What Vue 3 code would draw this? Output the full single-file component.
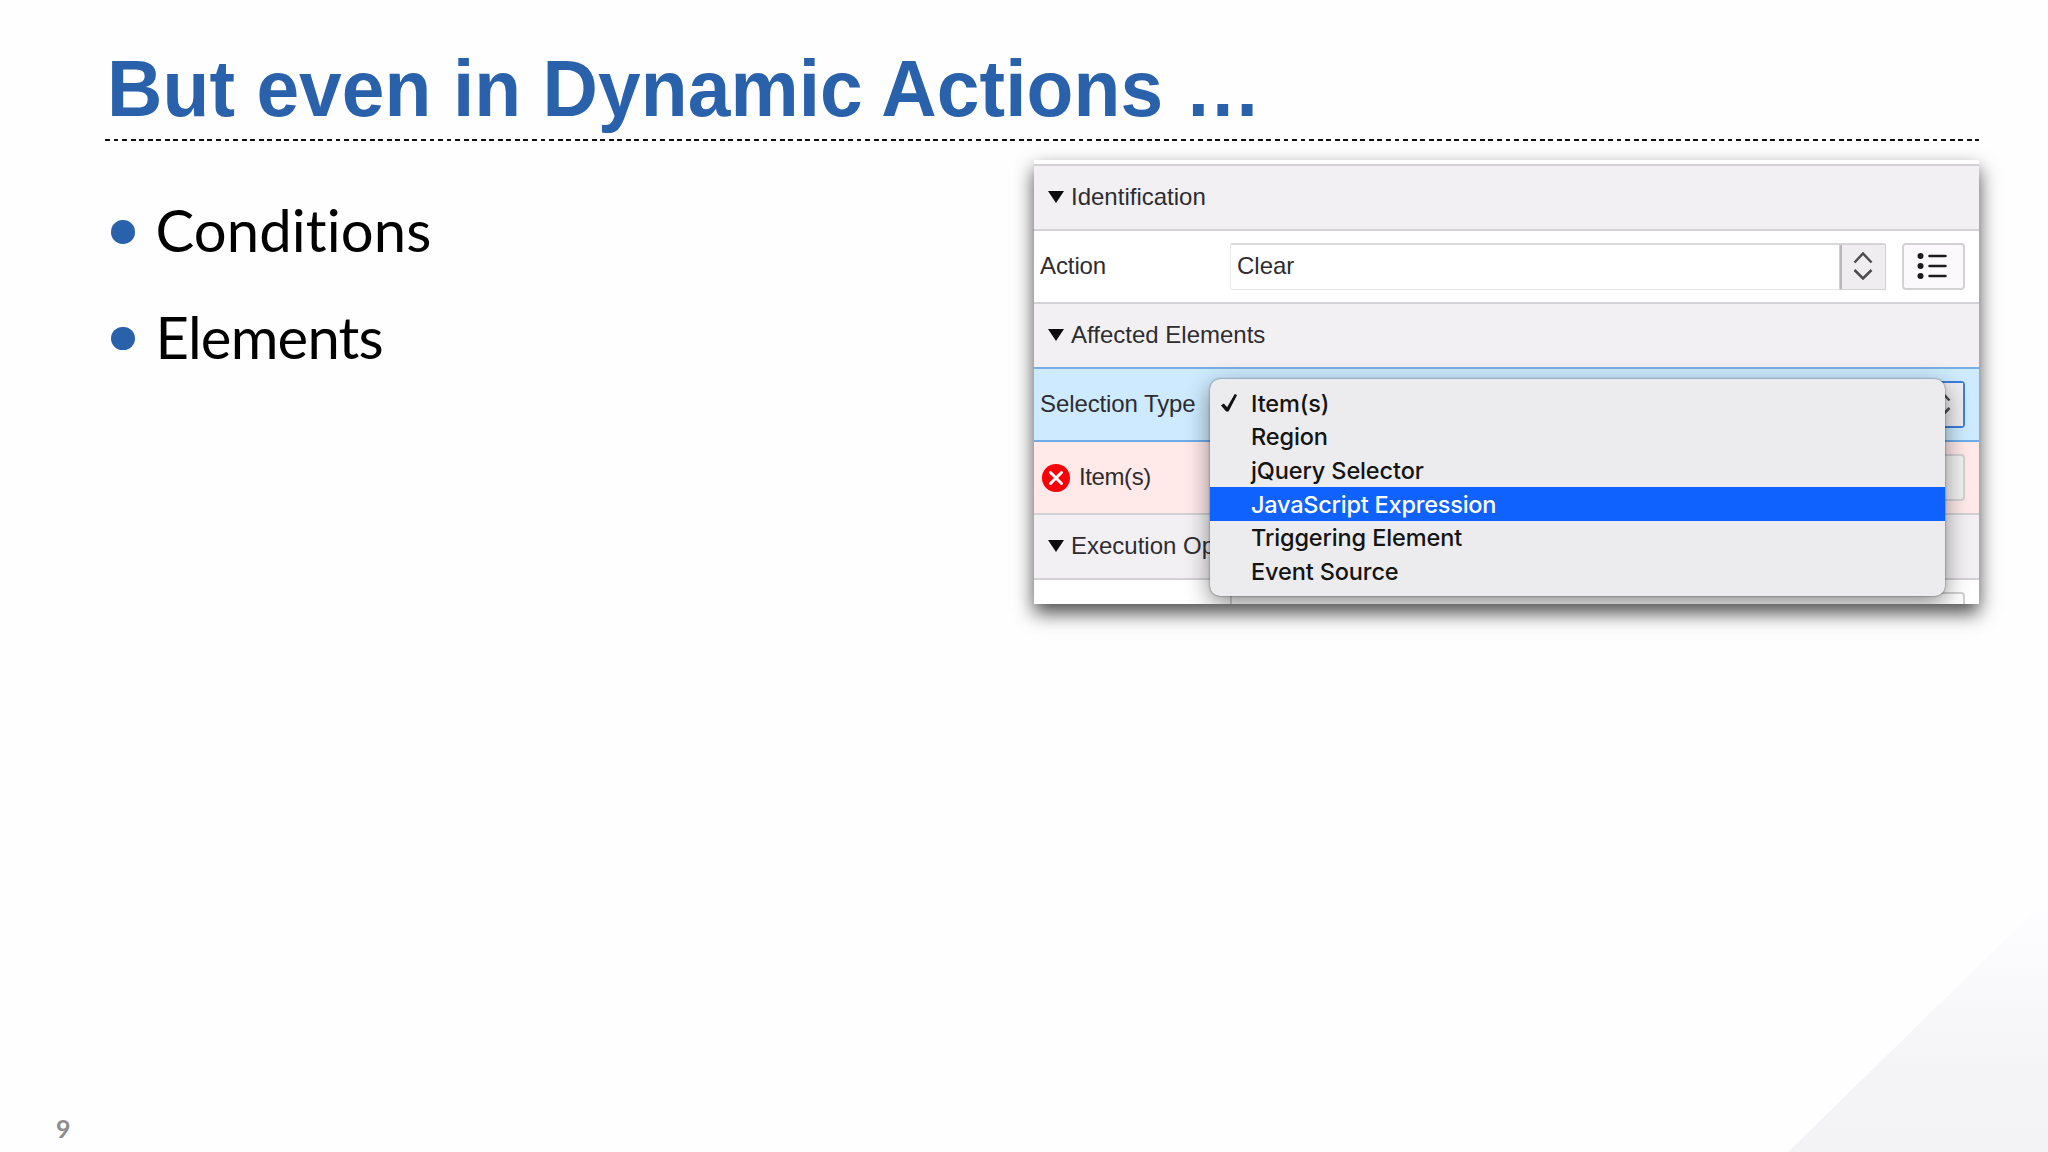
<script setup>
const bullets = ["Conditions", "Elements"];

const options = [
  { label: "Item(s)", checked: true },
  { label: "Region" },
  { label: "jQuery Selector" },
  { label: "JavaScript Expression", active: true },
  { label: "Triggering Element" },
  { label: "Event Source" },
];
</script>

<template>
  <main class="slide">
    <header class="slide-header">
      <h1 class="slide-title">But even in Dynamic Actions …</h1>
      <div class="slide-rule"></div>
    </header>

    <section class="slide-body">
      <ul class="bullets">
        <li v-for="bullet in bullets" :key="bullet" class="bullet">
          <span class="bullet-dot"></span>
          <span class="bullet-text">{{ bullet }}</span>
        </li>
      </ul>

      <!-- Property editor -->
      <div class="panel">
        <div class="group group-first">
          <span class="triangle"></span>
          <span class="group-title">Identification</span>
        </div>

        <div class="row">
          <label class="row-label">Action</label>
          <div class="select">
            <span class="select-value">Clear</span>
            <span class="select-arrows">
              <svg width="20" height="28" viewBox="0 0 20 28">
                <path d="M1.5 10.5 10 1.5l8.500 9M1.500 18l8.500 8.500 8.500-8.500" />
              </svg>
            </span>
          </div>
          <button class="list-button" aria-label="Quick pick">
            <svg width="30" height="26" viewBox="0 0 30 26">
              <circle cx="3.500" cy="3" r="3" />
              <circle cx="3.500" cy="13" r="3" />
              <circle cx="3.500" cy="23" r="3" />
              <path d="M12.500 3h16M12.500 13h16M12.500 23h16" />
            </svg>
          </button>
        </div>

        <div class="group group-before-focus">
          <span class="triangle"></span>
          <span class="group-title">Affected Elements</span>
        </div>

        <div class="row row-focus">
          <label class="row-label">Selection Type</label>
          <div class="select select-focus">
            <span class="select-value"></span>
            <span class="select-arrows">
              <svg width="20" height="28" viewBox="0 0 20 28">
                <path d="M1.5 10.5 10 1.5l8.500 9M1.500 18l8.500 8.500 8.500-8.500" />
              </svg>
            </span>
          </div>
        </div>

        <div class="row row-error">
          <svg class="error-icon" width="28" height="28" viewBox="0 0 28 28">
            <circle cx="14" cy="14" r="14" />
            <path d="M8.500 8.500l11 11M19.500 8.500l-11 11" />
          </svg>
          <label class="row-label">Item(s)</label>
          <div class="field field-grey"></div>
        </div>

        <div class="group">
          <span class="triangle"></span>
          <span class="group-title">Execution Options</span>
        </div>

        <div class="row row-last">
          <div class="field"></div>
        </div>

        <!-- Opened dropdown -->
        <ul class="popup">
          <li
            v-for="option in options"
            :key="option.label"
            class="option"
            :class="{ active: option.active }"
          >
            <svg
              v-if="option.checked"
              class="check"
              width="20"
              height="20"
              viewBox="0 0 20 20"
            >
              <path d="M1 12.500 4 10.500 7.500 14.500 15.500 0.500 18 1.500 9 19 6.500 19Z" />
            </svg>
            <span>{{ option.label }}</span>
          </li>
        </ul>
      </div>
    </section>

    <footer class="slide-footer">9</footer>
    <div class="corner"></div>
  </main>
</template>

<style>
body {
  margin: 0;
  overflow: hidden;
}
</style>

<style scoped>
/* === SLIDE === */
.slide {
  position: relative;
  display: flex;
  flex-direction: column;
  width: 2048px;
  height: 1152px;
  box-sizing: border-box;
  overflow: hidden;
  background: #fefefe;
  font-family: "Liberation Sans", Arial, sans-serif;
}

.slide-header {
  padding: 50px 69px 0 105px;
}

.slide-title {
  margin: 0 0 9px 2px;
  font-size: 76.7px;
  font-weight: 700;
  line-height: 80px;
  letter-spacing: 0.08px;
  color: #2a61ab;
  white-space: nowrap;
  transform: scaleY(1.04);
  transform-origin: 0 83%;
}

.slide-rule {
  height: 2px;
  background: repeating-linear-gradient(
    to right,
    #111 0,
    #111 4.9px,
    transparent 4.9px,
    transparent 8.54px
  );
}

.slide-body {
  flex: 1;
  display: grid;
  grid-template-columns: 923px 945px;
  align-items: start;
  padding-left: 111px;
}

/* === BULLETS === */
.bullets {
  margin: 0;
  padding: 36px 0 0;
  list-style: none;
}

.bullet {
  display: flex;
  align-items: center;
  height: 106.500px;
}

.bullet-dot {
  width: 23.500px;
  height: 23.500px;
  margin-top: 3px;
  border-radius: 50%;
  background: #2a61ab;
}

.bullet-text {
  margin-left: 21px;
  font-family: Lato, sans-serif;
  font-size: 58px;
  line-height: 70px;
  letter-spacing: 0.1px;
  color: #000;
}

.bullet:last-child .bullet-text {
  letter-spacing: -0.8px;
}

/* === PANEL === */
.panel {
  position: relative;
  box-sizing: border-box;
  height: 444px;
  margin-top: 19px;
  padding-top: 4px;
  overflow: hidden;
  background: #fff;
  box-shadow: 0 9px 18px rgba(0, 0, 0, 0.7);
  font-size: 24px;
  color: #2e2c30;
}

.group {
  display: flex;
  align-items: center;
  box-sizing: border-box;
  height: 65px;
  padding-left: 14px;
  border-bottom: 2px solid #d3d1d5;
  background: #f2f0f3;
  white-space: nowrap;
}

.group-first {
  height: 67px;
  border-top: 2px solid #d3d1d5;
}

.group-before-focus {
  border-bottom-color: #78aee6;
}

.group-title {
  padding-bottom: 2px;
}

.triangle {
  margin: 0 7px 1px 0;
  border-left: 8px solid transparent;
  border-right: 8px solid transparent;
  border-top: 12px solid #0c0c0e;
}

.row {
  display: flex;
  align-items: center;
  box-sizing: border-box;
  height: 73px;
  padding: 0 14px 0 6px;
  border-bottom: 2px solid #d3d1d5;
}

.row-label {
  width: 190px;
  padding-bottom: 2px;
  letter-spacing: -0.1px;
  white-space: nowrap;
}

.row-focus {
  background: #cdeafe;
  border-bottom-color: #6fabe8;
}

.row-error {
  padding-left: 8px;
  background: #ffe9e9;
}

.row-error .row-label {
  width: 151px;
  margin-left: 9px;
  letter-spacing: -0.4px;
}

.row-last {
  align-items: flex-start;
  padding: 12px 14px 0 196px;
  border-bottom: none;
}

.error-icon circle {
  fill: #fb0007;
}

.error-icon path {
  stroke: #fff;
  stroke-width: 3;
  stroke-linecap: round;
}

/* === FIELDS === */
.select {
  flex: 1;
  display: flex;
  box-sizing: border-box;
  height: 47px;
  border: 1px solid #e9e7ea;
  border-top: 2px solid #d9d7da;
  border-radius: 3px;
  background: #fff;
}

.select-value {
  flex: 1;
  padding-left: 6px;
  line-height: 42px;
}

.select-arrows {
  display: flex;
  align-items: center;
  justify-content: center;
  width: 45px;
  padding: 0 1px 2px 0;
  box-sizing: border-box;
  border-left: 2px solid #b9b7ba;
  background: #efedf0;
  box-shadow: 0 0 0 1px #d3d1d4;
}

.select-arrows path {
  fill: none;
  stroke: #4d4b4f;
  stroke-width: 2.500;
}

.select-focus {
  border: 2px solid #397fdd;
  border-radius: 4px;
}

.select-focus .select-arrows {
  box-shadow: none;
}

.list-button {
  display: flex;
  align-items: center;
  justify-content: center;
  box-sizing: border-box;
  width: 63px;
  height: 47px;
  margin-left: 16px;
  padding: 0 3px 2px 0;
  border: 2px solid #d3d1d4;
  border-radius: 4px;
  background: #fbf9fc;
}

.list-button circle {
  fill: #1c1b1e;
}

.list-button path {
  stroke: #1c1b1e;
  stroke-width: 2.500;
  stroke-linecap: round;
}

.field {
  flex: 1;
  box-sizing: border-box;
  height: 47px;
  border: 2px solid #d3d1d4;
  border-radius: 4px;
  background: #fff;
}

.field-grey {
  background: #f2f2f2;
}

/* === POPUP === */
.popup {
  position: absolute;
  top: 218.500px;
  left: 176px;
  width: 735px;
  box-sizing: border-box;
  margin: 0;
  padding: 8px 0;
  list-style: none;
  border-radius: 10px;
  background: #ececee;
  box-shadow: 0 0 2px rgba(0, 0, 0, 0.6), 0 8px 24px rgba(0, 0, 0, 0.45);
  font-family: Inter, sans-serif;
  font-size: 23.500px;
  font-weight: 500;
  letter-spacing: -0.12px;
  color: #141414;
}

.option {
  display: flex;
  align-items: center;
  height: 33.600px;
  padding-left: 41px;
  white-space: nowrap;
}

.option.active {
  background: #1062fe;
  color: #fff;
  letter-spacing: -0.22px;
}

.check {
  margin: 0 12px 0 -31px;
  width: 19px;
  fill: #111;
}

/* === FOOTER === */
.slide-footer {
  padding: 0 0 9px 56px;
  font-family: Lato, sans-serif;
  font-size: 25px;
  font-weight: 700;
  line-height: 30px;
  color: #8c8c8c;
}

.corner {
  position: absolute;
  right: 0;
  bottom: 0;
  width: 260px;
  height: 254px;
  background: linear-gradient(#fefdff, #f4f3f6 70%, #f3f2f5);
  clip-path: polygon(100% 0, 100% 100%, 0 100%);
}
</style>
